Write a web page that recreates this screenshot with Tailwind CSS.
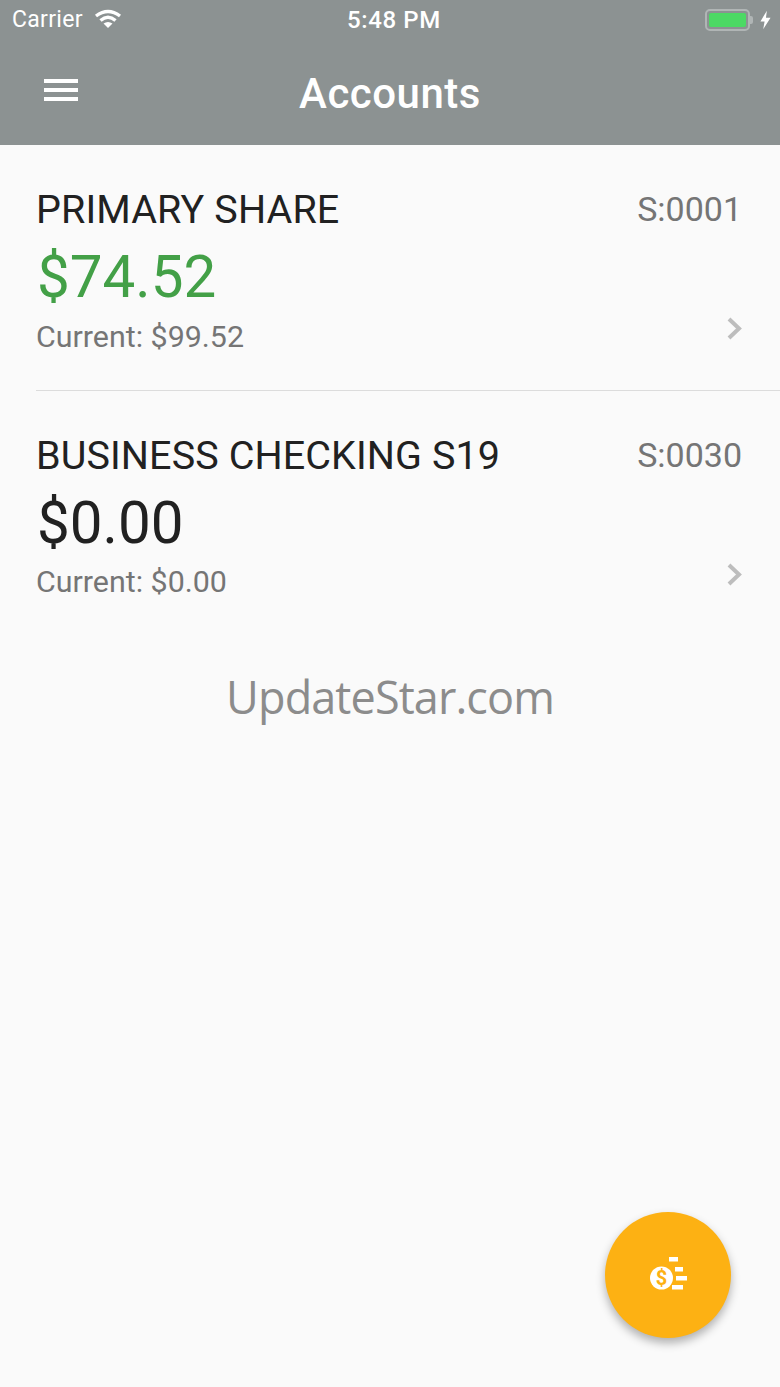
<!DOCTYPE html>
<html lang="en">

<head>
    <meta charset="UTF-8">
    <meta name="viewport" content="width=device-width, initial-scale=1.0">
    <title>Accounts</title>
    <script src="https://cdn.jsdelivr.net/npm/@tailwindcss/browser@4"></script>
</head>

<body class="bg-[#fafafa] font-[Roboto,sans-serif]">
    <div class="relative w-[780px] h-[1387px] overflow-hidden">
        <header class="h-[145px] bg-[#8c9292] text-white">
            <div class="relative flex items-center justify-between h-[40px] pl-3 pr-[9px]">
                <div class="flex items-center gap-[11px]">
                    <span class="text-[23px] leading-[40px] tracking-[0.3px]">Carrier</span>
                    <svg class="w-[28px] h-[20px] mb-[3px]" viewBox="0 0 28 20" fill="none" stroke="white" stroke-width="3.4">
                        <path d="M2 7 Q14 -2 26 7" />
                        <path d="M6.5 11.5 Q14 5 21.5 11.5" />
                        <path d="M14 19 L9.5 14.5 Q14 11.5 18.5 14.5 Z" fill="white" stroke="none" />
                    </svg>
                </div>
                <span class="absolute left-[347px] top-0 text-[24px] leading-[40px] font-medium tracking-[0.6px]">5:48 PM</span>
                <div class="flex items-center gap-[7px]">
                    <div class="flex items-center">
                        <div class="w-[45px] h-[22px] rounded-[5px] border-2 border-[#b0b5b5] p-[2px]">
                            <div class="w-full h-full rounded-[2px] bg-[#4cd964]"></div>
                        </div>
                        <div class="w-[3px] h-[8px] rounded-r-[2px] bg-[#b0b5b5]"></div>
                    </div>
                    <svg class="w-[11px] h-[20px]" viewBox="0 0 12 20" fill="white">
                        <path d="M7.5 0 L0.5 11.5 H5 L3.5 20 L11.5 7.5 H6.5 Z" />
                    </svg>
                </div>
            </div>
            <div class="relative flex items-center justify-center h-[105px] pt-[2px]">
                <div class="absolute left-[44px] top-[39px] w-[34px] flex flex-col gap-[5px]">
                    <div class="h-[4px] bg-white"></div>
                    <div class="h-[4px] bg-white"></div>
                    <div class="h-[4px] bg-white"></div>
                </div>
                <h1 class="text-[42px] leading-none font-medium tracking-[0.5px]">Accounts</h1>
            </div>
        </header>

        <main>
            <div class="relative h-[246px] ml-[36px] border-b border-[#dcdcdc]">
                <div class="flex justify-between items-start pt-[42px] pr-[38px]">
                    <span class="text-[39.5px] leading-[46px] text-[#212121] tracking-[0.1px]">PRIMARY SHARE</span>
                    <span class="text-[34px] leading-[44px] text-[#757575]">S:0001</span>
                </div>
                <div class="text-[58.3px] leading-[66px] text-[#43a047] mt-[11px] ml-[1px]">$74.52</div>
                <div class="text-[30.4px] leading-[36px] text-[#757575] mt-[9px]">Current: $99.52</div>
                <svg class="absolute left-[691px] top-[172px] w-[16px] h-[23px]" viewBox="0 0 16 23" fill="none" stroke="#bdbdbd" stroke-width="4">
                    <path d="M2 2 L12 11.5 L2 21" />
                </svg>
            </div>
            <div class="relative h-[245px] ml-[36px]">
                <div class="flex justify-between items-start pt-[42px] pr-[38px]">
                    <span class="text-[39.5px] leading-[46px] text-[#212121] tracking-[0.1px]">BUSINESS CHECKING S19</span>
                    <span class="text-[34px] leading-[44px] text-[#757575]">S:0030</span>
                </div>
                <div class="text-[58.3px] leading-[66px] text-[#212121] mt-[11px] ml-[1px]">$0.00</div>
                <div class="text-[30.4px] leading-[36px] text-[#757575] mt-[8px]">Current: $0.00</div>
                <svg class="absolute left-[691px] top-[172px] w-[16px] h-[23px]" viewBox="0 0 16 23" fill="none" stroke="#bdbdbd" stroke-width="4">
                    <path d="M2 2 L12 11.5 L2 21" />
                </svg>
            </div>
        </main>

        <div class="absolute left-0 right-0 top-[668px] text-center text-[45px] leading-[58px] tracking-[-0.9px] text-[#8c8c8c] font-['Open_Sans',sans-serif] font-normal">UpdateStar.com</div>

        <button class="absolute left-[605px] top-[1212px] w-[126px] h-[126px] rounded-full bg-[#fdb113] shadow-[0_5px_10px_rgba(0,0,0,0.3)] flex items-center justify-center">
            <svg class="w-[38px] h-[36px]" viewBox="0 0 38 36" fill="white">
                <rect x="20" y="0" width="9" height="4.5" />
                <rect x="26" y="10" width="8" height="4.5" />
                <rect x="27" y="19" width="11" height="4.5" />
                <rect x="23" y="28" width="11" height="4.5" />
                <circle cx="12.5" cy="21" r="11.5" />
                <text x="12.5" y="28" text-anchor="middle" font-size="20" font-weight="700" font-family="Roboto, sans-serif" fill="#fdb113">$</text>
            </svg>
        </button>
    </div>
</body>

</html>
